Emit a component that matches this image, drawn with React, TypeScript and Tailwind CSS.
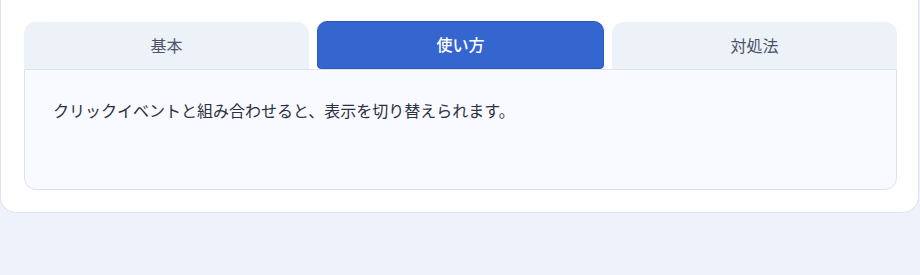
import React, { useState } from 'react';

const tabs = [
  { id: 'basic', label: '基本', body: 'クリックした場所に応じて、表示する内容を変えられます。' },
  { id: 'usage', label: '使い方', body: 'クリックイベントと組み合わせると、表示を切り替えられます。' },
  { id: 'fix', label: '対処法', body: 'うまく切り替わらない場合は、状態の更新を確認しましょう。' },
];

export default function App() {
  const [active, setActive] = useState('usage');
  const current = tabs.find((t) => t.id === active)!;

  return (
    <div
      className="w-full min-h-[275px] bg-[#eef2fa]"
      style={{ fontFamily: '"Noto Sans", "Noto Sans CJK JP", sans-serif' }}
    >
      <div className="mr-[1px] bg-white rounded-b-2xl border-x border-b border-[#dfe5ee] pl-[23px] pr-[21px] pt-[21px] pb-[22px]">
        {/* Tabs */}
        <div className="flex items-end gap-2">
          {tabs.map((t) => {
            const on = t.id === active;
            return (
              <button
                key={t.id}
                onClick={() => setActive(t.id)}
                className={
                  on
                    ? 'flex-1 h-[48px] rounded-t-[10px] rounded-b-[4px] bg-[#3566d0] border border-[#2c58bd] text-white text-[16px] font-medium'
                    : 'flex-1 h-[47px] rounded-t-xl bg-[#edf1f8] text-[#4b5568] text-[16px]'
                }
              >
                {t.label}
              </button>
            );
          })}
        </div>
        {/* Panel */}
        <div className="h-[121px] bg-[#f8faff] border border-[#dde3ec] rounded-b-xl px-7 pt-[29px] text-[16px] text-[#2b3040]">
          {current.body}
        </div>
      </div>
    </div>
  );
}
